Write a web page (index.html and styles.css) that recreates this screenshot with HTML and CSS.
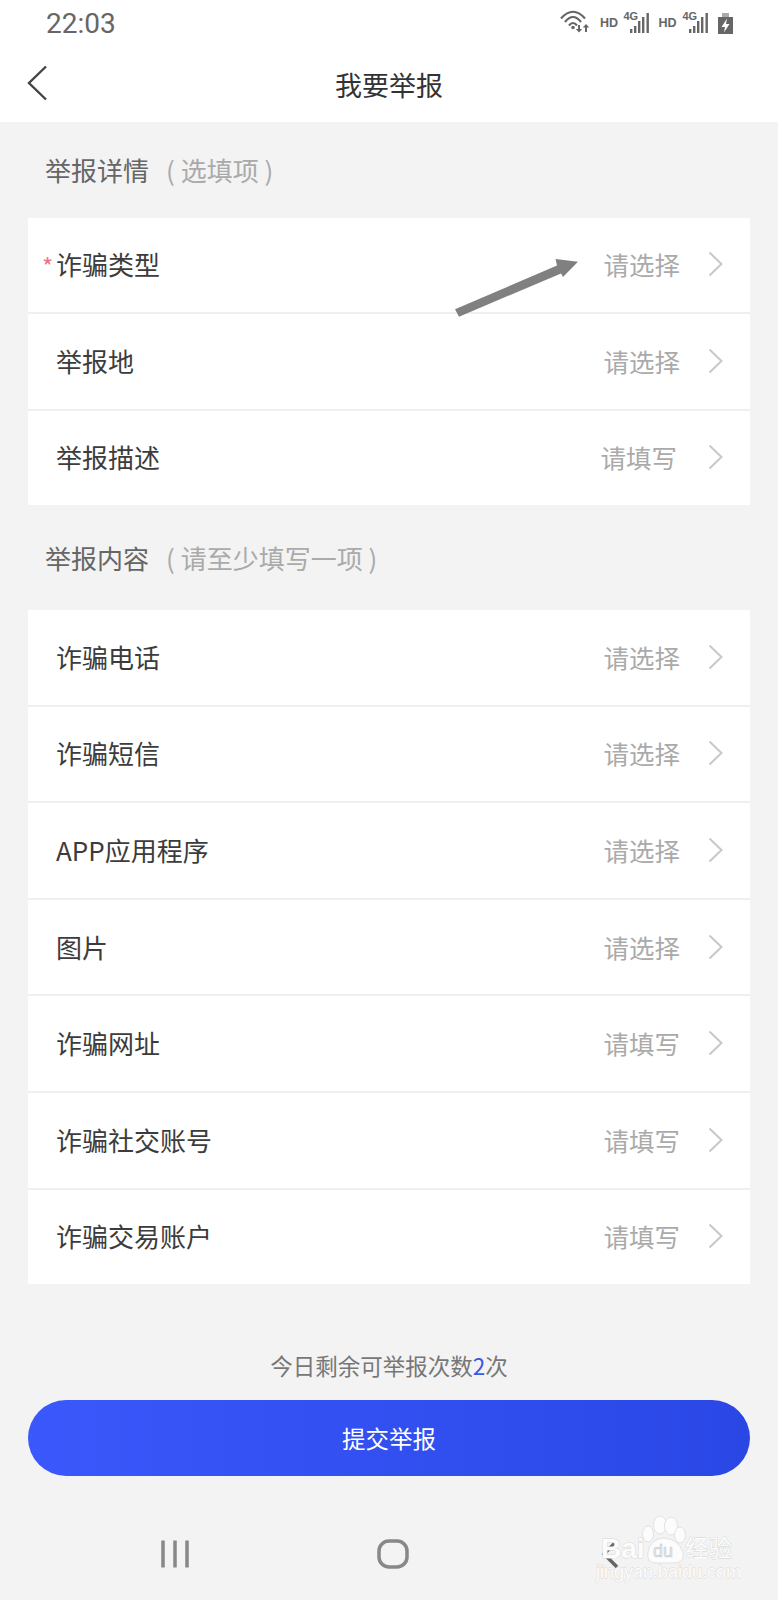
FILE: index.html
```html
<!DOCTYPE html>
<html lang="zh-CN">
<head>
<meta charset="utf-8">
<title>我要举报</title>
<link rel="stylesheet" href="styles.css">
</head>
<body>
<div class="page">
  <div class="top">
    <div class="status">
      <span class="time">22:03</span>
      <svg class="status-icons" width="178" height="50" viewBox="0 0 178 50">
        <g class="ic-line">
          <path d="M1 18.500Q13 5 25 18.500"/>
          <path d="M5 22Q13 12 21 22"/>
          <path d="M9 25.500Q13 20.500 17 25.500"/>
        </g>
        <circle class="ic-fill" cx="13" cy="27.500" r="1.800"/>
        <path class="ic-fill" d="M18 25h2v4h2.200l-3.200 3.500-3.200-3.500h2.200zM26 24l3.200 3.500h-2.200v4.500h-2v-4.500h-2.200z"/>
        <text class="ic-hd" x="40" y="27">HD</text>
        <text class="ic-4g" x="63.500" y="20">4G</text>
        <path class="ic-fill" d="M70 29h2.400v4h-2.400zM74 26h2.400v7h-2.400zM78 21h2.400v12h-2.400zM82 17h2.400v16h-2.400zM86.500 13h2.400v20h-2.400z"/>
        <text class="ic-hd" x="98.500" y="27">HD</text>
        <text class="ic-4g" x="122.500" y="20">4G</text>
        <path class="ic-fill" d="M129 29h2.400v4h-2.400zM133 26h2.400v7h-2.400zM137 21h2.400v12h-2.400zM141 17h2.400v16h-2.400zM145.500 13h2.400v20h-2.400z"/>
        <path class="ic-pale" d="M162 13h7v4h-7z"/>
        <path class="ic-fill" d="M158 17h15v17h-15z"/>
        <path class="ic-white" d="M167 18.500l-5.500 8.500h3.500l-1 5.500 5.500-8.500h-3.500z"/>
      </svg>
    </div>
    <div class="nav">
      <svg class="back" width="21" height="36" viewBox="0 0 21 36"><path d="M19 1.500L2 18l17 16.500"/></svg>
      <span class="nav-title">我要举报</span>
    </div>
  </div>

  <div class="section first"><span class="section-name">举报详情</span><span class="section-hint">( 选填项 )</span></div>
  <div class="card">
    <div class="row"><span class="label"><span class="star">*</span>诈骗类型</span><span class="value">请选择</span><svg class="chev" width="15" height="26" viewBox="0 0 15 26"><path d="M1.500 1.500L13.500 13L1.500 24.500"/></svg></div>
    <div class="row"><span class="label">举报地</span><span class="value">请选择</span><svg class="chev" width="15" height="26" viewBox="0 0 15 26"><path d="M1.500 1.500L13.500 13L1.500 24.500"/></svg></div>
    <div class="row"><span class="label">举报描述</span><span class="value shifted">请填写</span><svg class="chev" width="15" height="26" viewBox="0 0 15 26"><path d="M1.500 1.500L13.500 13L1.500 24.500"/></svg></div>
  </div>

  <div class="section second"><span class="section-name">举报内容</span><span class="section-hint">( 请至少填写一项 )</span></div>
  <div class="card">
    <div class="row"><span class="label">诈骗电话</span><span class="value">请选择</span><svg class="chev" width="15" height="26" viewBox="0 0 15 26"><path d="M1.500 1.500L13.500 13L1.500 24.500"/></svg></div>
    <div class="row"><span class="label">诈骗短信</span><span class="value">请选择</span><svg class="chev" width="15" height="26" viewBox="0 0 15 26"><path d="M1.500 1.500L13.500 13L1.500 24.500"/></svg></div>
    <div class="row"><span class="label">APP应用程序</span><span class="value">请选择</span><svg class="chev" width="15" height="26" viewBox="0 0 15 26"><path d="M1.500 1.500L13.500 13L1.500 24.500"/></svg></div>
    <div class="row"><span class="label">图片</span><span class="value">请选择</span><svg class="chev" width="15" height="26" viewBox="0 0 15 26"><path d="M1.500 1.500L13.500 13L1.500 24.500"/></svg></div>
    <div class="row"><span class="label">诈骗网址</span><span class="value">请填写</span><svg class="chev" width="15" height="26" viewBox="0 0 15 26"><path d="M1.500 1.500L13.500 13L1.500 24.500"/></svg></div>
    <div class="row"><span class="label">诈骗社交账号</span><span class="value">请填写</span><svg class="chev" width="15" height="26" viewBox="0 0 15 26"><path d="M1.500 1.500L13.500 13L1.500 24.500"/></svg></div>
    <div class="row"><span class="label">诈骗交易账户</span><span class="value">请填写</span><svg class="chev" width="15" height="26" viewBox="0 0 15 26"><path d="M1.500 1.500L13.500 13L1.500 24.500"/></svg></div>
  </div>

  <p class="quota">今日剩余可举报次数<span class="quota-num">2</span>次</p>
  <div class="submit">提交举报</div>

  <div class="sysnav">
    <svg class="sys-ic" width="30" height="30" viewBox="0 0 30 30"><path d="M3 1.500v27M15 1.500v27M27 1.500v27"/></svg>
    <svg class="sys-ic" width="32" height="30" viewBox="0 0 32 30"><rect x="2" y="2" width="28" height="26" rx="10"/></svg>
    <svg class="sys-ic" width="20" height="30" viewBox="0 0 20 30"><path d="M17 2L4 15l13 13"/></svg>
  </div>

  <svg class="arrow" width="126" height="60" viewBox="0 0 126 60">
    <path class="arrow-fill" d="M1 50.300L103 6.500 101.500 0 124 2.700 109 18 107 14.500 5 57.700z"/>
  </svg>

  <svg class="watermark" width="150" height="80" viewBox="0 0 150 80">
    <g class="wm-paw">
      <ellipse cx="58" cy="24" rx="5.500" ry="8"/>
      <ellipse cx="70" cy="15" rx="6.500" ry="9"/>
      <ellipse cx="81" cy="16" rx="6.500" ry="9"/>
      <ellipse cx="90" cy="25" rx="5.500" ry="8"/>
      <path d="M58 42Q60 29 74 28Q88 29 93 42Q95 53 84 53H66Q56 53 58 42z"/>
    </g>
    <text class="wm-bai" x="11" y="48">Bai</text>
    <text class="wm-du" x="63" y="47">du</text>
    <text class="wm-cn" x="95" y="47">经验</text>
    <text class="wm-url" x="6" y="68">jingyan.baidu.com</text>
  </svg>
</div>
</body>
</html>
```

FILE: styles.css
```css
* { box-sizing: border-box; }
html, body { margin: 0; padding: 0; }
body {
  font-family: "Noto Sans CJK SC", "Noto Sans", sans-serif;
  background: #f3f3f3;
}
.page {
  position: relative;
  width: 778px;
  height: 1600px;
  overflow: hidden;
  background: #f3f3f3;
}
.top { background: #fff; height: 122px; }
.status {
  height: 50px;
  display: flex;
  justify-content: space-between;
  padding: 0 40px 0 46px;
}
.time {
  font-family: Roboto, "Liberation Sans", sans-serif;
  font-size: 28px;
  line-height: 48px;
  color: #666;
}
.status-icons { display: block; }
.ic-line { fill: none; stroke: #666; stroke-width: 2.200; }
.ic-fill { fill: #666; }
.ic-pale { fill: #aaa; }
.ic-white { fill: #fff; }
.ic-hd { font-family: "Liberation Sans", sans-serif; font-weight: 700; font-size: 12.500px; fill: #666; }
.ic-4g { font-family: "Liberation Sans", sans-serif; font-weight: 700; font-size: 11px; fill: #666; }
.nav {
  position: relative;
  height: 72px;
  display: flex;
  align-items: center;
  justify-content: center;
  padding-bottom: 2px;
}
.back {
  position: absolute;
  left: 27px;
  top: 15px;
  fill: none;
  stroke: #444;
  stroke-width: 2.400;
}
.nav-title { font-size: 27px; color: #333; line-height: 36px; }

.section {
  display: flex;
  align-items: center;
  padding-left: 45px;
  font-size: 26px;
}
.section.first { height: 95.500px; }
.section.second { height: 105px; }
.section-name { color: #666; }
.section-hint { color: #aaa; margin-left: 17px; }

.card {
  margin: 0 28px;
  background: #fff;
  display: flex;
  flex-direction: column;
}
.row {
  height: 96.650px;
  display: flex;
  align-items: center;
  padding: 0 27px 1px 28px;
  border-bottom: 2px solid #eef0f0;
}
.row:last-child { height: 94.150px; border-bottom: 0; }
.label {
  flex: 1;
  font-size: 26px;
  color: #3c3c3c;
  line-height: 34px;
  height: 34px;
}
.star {
  display: inline-block;
  width: 14px;
  height: 34px;
  margin-left: -14px;
  color: #ee7088;
  font-size: 24px;
  line-height: 38px;
  vertical-align: top;
}
.value {
  font-size: 25.500px;
  color: #aaa;
  line-height: 34px;
}
.value.shifted { margin-right: 3px; }
.chev {
  margin-left: 28px;
  fill: none;
  stroke: #c8c8c8;
  stroke-width: 2;
}

.quota {
  margin: 66.500px 0 0;
  text-align: center;
  font-size: 22.500px;
  line-height: 30px;
  color: #777;
}
.quota-num { color: #3a58e0; }
.submit {
  margin: 20px 28px 0;
  height: 76px;
  border-radius: 38px;
  background: linear-gradient(90deg, #3a58fb, #2a47e6);
  color: #fff;
  font-size: 23.500px;
  padding-bottom: 1px;
  display: flex;
  align-items: center;
  justify-content: center;
}
.sysnav {
  height: 124px;
  padding-top: 63px;
  display: grid;
  grid-template-columns: 160px 30px 187px 32px 191px 20px;
  align-items: start;
}
.sys-ic { fill: none; stroke: #888; stroke-width: 3.500; }
.sys-ic:nth-child(1) { grid-column: 2; }
.sys-ic:nth-child(2) { grid-column: 4; }
.sys-ic:nth-child(3) { grid-column: 6; stroke: #666; }

.arrow {
  position: absolute;
  left: 454px;
  top: 259px;
}
.arrow-fill { fill: #808080; }

.watermark {
  position: absolute;
  left: 590px;
  top: 1510px;
}
.wm-paw ellipse, .wm-paw path { fill: #fcfcfc; stroke: #e2e2e2; stroke-width: 1; }
.wm-bai { font-family: "Liberation Sans", sans-serif; font-weight: 700; font-size: 28px; fill: #fcfcfc; stroke: #d8d8d8; stroke-width: 1; paint-order: stroke; }
.wm-du { font-family: "Liberation Sans", sans-serif; font-size: 18px; fill: #eeeeee; stroke: #c8c8c8; stroke-width: 0.600; }
.wm-cn { font-family: "Noto Sans CJK SC", sans-serif; font-size: 23.500px; fill: #fcfcfc; stroke: #d4d4d4; stroke-width: 0.800; paint-order: stroke; }
.wm-url { font-family: "Liberation Sans", sans-serif; font-size: 18px; fill: #fcfcfc; stroke: #d8d8d8; stroke-width: 0.800; paint-order: stroke; }
```
